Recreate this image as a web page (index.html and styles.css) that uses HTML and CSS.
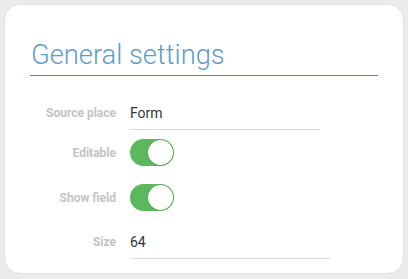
FILE: index.html
```html
<!DOCTYPE html>
<html>
<head>
<meta charset="utf-8">
<link rel="stylesheet" href="styles.css">
</head>
<body>
<div class="card">
  <h1 class="title">General settings</h1>
  <div class="form">
    <div class="row input-row">
      <div class="label">Source place</div>
      <div class="field w190">Form</div>
    </div>
    <div class="row toggle-row">
      <div class="label">Editable</div>
      <div class="toggle"><span class="knob"></span></div>
    </div>
    <div class="row toggle-row">
      <div class="label">Show field</div>
      <div class="toggle"><span class="knob"></span></div>
    </div>
    <div class="row input-row size-row">
      <div class="label">Size</div>
      <div class="field w200">64</div>
    </div>
  </div>
</div>
</body>
</html>
```
FILE: styles.css
```css
html, body {
  margin: 0;
  padding: 0;
  background: #ebebeb;
  font-family: Roboto, "Liberation Sans", sans-serif;
}
.card {
  margin: 4px 0 0 4px;
  width: 398px;
  height: 268px;
  background: #fff;
  border: 1px solid #e2e2e2;
  border-radius: 16px;
  box-sizing: content-box;
  padding: 0;
}
.title {
  margin: 35px 25px 0 25px;
  padding: 0 0 4px 1px;
  font-size: 27.3px;
  line-height: 31px;
  font-weight: 300;
  color: #5e9dca;
  border-bottom: 1px solid #3d8db4;
}
.form {
  margin-top: 20px;
  display: flex;
  flex-direction: column;
}
.row {
  display: flex;
  align-items: center;
}
.label {
  width: 121px;
  padding-right: 14px;
  text-align: right;
  font-size: 12px;
  font-weight: 700;
  color: #c3c3c3;
  box-sizing: border-box;
  margin-left: 4px;
}
.input-row {
  height: 34px;
}
.field {
  height: 34px;
  line-height: 34px;
  font-size: 14px;
  color: #333;
  border-bottom: 1px solid #dcdcdc;
  box-sizing: border-box;
  padding-left: 0;
}
.w190 { width: 190px; }
.w200 { width: 200px; }
.toggle-row {
  height: 45px;
}
.size-row {
  margin-top: 5px;
}
.toggle {
  width: 44px;
  height: 27px;
  border-radius: 14px;
  background: #5cb85c;
  position: relative;
  box-sizing: border-box;
}
.knob {
  position: absolute;
  right: 1px;
  top: 1px;
  width: 25px;
  height: 25px;
  border-radius: 50%;
  background: #fff;
  box-shadow: 0 0 0 0.5px #4a9a4a;
}
```
